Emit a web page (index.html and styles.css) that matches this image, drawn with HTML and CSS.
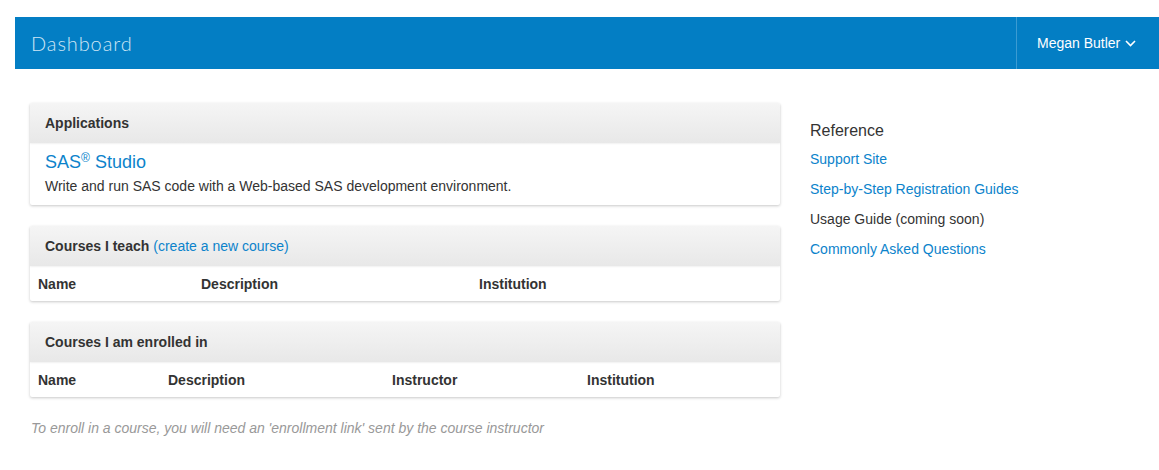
FILE: index.html
```html
<!DOCTYPE html>
<html>
<head>
<meta charset="utf-8">
<link rel="stylesheet" href="styles.css">
</head>
<body>
<div class="page">
  <nav class="navbar">
    <div class="brand">Dashboard</div>
    <div class="user">Megan Butler
      <svg class="chev" width="11" height="7" viewBox="0 0 11 7"><path d="M1 1 L5.5 5.5 L10 1" fill="none" stroke="#fff" stroke-width="1.6"/></svg>
    </div>
  </nav>
  <div class="content">
    <div class="main">
      <section class="panel">
        <div class="panel-head">Applications</div>
        <div class="panel-body">
          <a class="app-title">SAS<sup>®</sup> Studio</a>
          <p class="app-desc">Write and run SAS code with a Web-based SAS development environment.</p>
        </div>
      </section>
      <section class="panel">
        <div class="panel-head">Courses I teach <a class="link">(create a new course)</a></div>
        <div class="table-row teach">
          <span>Name</span><span>Description</span><span>Institution</span>
        </div>
      </section>
      <section class="panel">
        <div class="panel-head">Courses I am enrolled in</div>
        <div class="table-row enrolled">
          <span>Name</span><span>Description</span><span>Instructor</span><span>Institution</span>
        </div>
      </section>
      <p class="note">To enroll in a course, you will need an 'enrollment link' sent by the course instructor</p>
    </div>
    <aside class="side">
      <h3>Reference</h3>
      <ul>
        <li><a class="link">Support Site</a></li>
        <li><a class="link">Step-by-Step Registration Guides</a></li>
        <li>Usage Guide (coming soon)</li>
        <li><a class="link">Commonly Asked Questions</a></li>
      </ul>
    </aside>
  </div>
</div>
</body>
</html>
```
FILE: styles.css
```css
html, body { margin: 0; padding: 0; background: #fff; }
body { font-family: "Liberation Sans", Arial, sans-serif; font-size: 14px; color: #333; }
.page { padding: 17px 0 0 15px; }
.navbar {
  height: 52px; background: #037ec4; display: flex; align-items: stretch; justify-content: space-between;
}
.brand {
  font-family: Lato, "Open Sans", sans-serif; font-weight: 300; font-size: 20px; color: #cfe6f5;
  padding-left: 16px; display: flex; align-items: center; letter-spacing: 0.9px;
}
.user {
  border-left: 1px solid #3b9bd2; padding: 0 22px 0 20px; display: flex; align-items: center;
  color: #fff; font-size: 14px; gap: 5px; width: 100px;
}
.chev { margin-top: 1px; }
.content { display: flex; padding: 34px 0 0 15px; }
.main { width: 750px; }
.side { margin-left: 30px; padding-top: 18px; }
.panel {
  background: #fff; box-shadow: 0 1px 3px rgba(0,0,0,0.22); margin-bottom: 21px; border-radius: 2px;
}
.panel-head {
  height: 40px; box-sizing: border-box; padding: 0 15px; display: flex; align-items: center; gap: 4px;
  background: linear-gradient(#f5f5f5, #e8e8e8); font-weight: bold; color: #333;
  box-shadow: 0 1px 2px rgba(0,0,0,0.06); border-radius: 2px 2px 0 0;
}
.link { color: #0c83cb; font-weight: normal; text-decoration: none; }
.panel-body { padding: 9px 15px 9px; }
.app-title { display: block; font-size: 18px; line-height: 20px; color: #0c83cb; }
.app-title sup { font-size: 12px; line-height: 0; vertical-align: 6px; }
.app-desc { margin: 4px 0 0; line-height: 20px; }
.table-row { display: grid; height: 35px; align-items: center; padding-left: 8px; font-weight: bold; }
.teach { grid-template-columns: 163px 278px 1fr; }
.enrolled { grid-template-columns: 130px 224px 195px 1fr; }
.note { margin: 11px 0 0 1px; font-style: italic; color: #999; line-height: 20px; }
.side h3 { margin: 0; font-size: 16px; font-weight: normal; color: #333; line-height: 20px; }
.side ul { list-style: none; margin: 0; padding: 0; }
.side li { line-height: 20px; margin-top: 10px; }
.side li:first-child { margin-top: 8px; }
```
